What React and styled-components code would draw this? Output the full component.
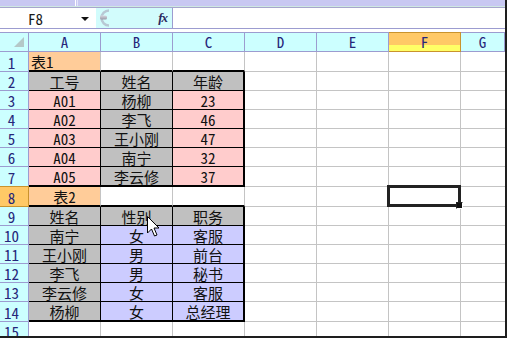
import React from "react";
import styled, { createGlobalStyle } from "styled-components";

const colors = {
	strip: "#c8c8f2",
	stripEdge: "#cfe8e2",
	frameLine: "#a6a6cc",
	headBg: "#ccffff",
	headLine: "#9c9cd0",
	headInk: "#26267a",
	grid: "#c4c4c4",
	peach: "#ffcc99",
	pink: "#ffcccc",
	gray: "#c0c0c0",
	lilac: "#ccccff",
	activeTop: "#ffc966",
	activeBottom: "#ffff66",
	activeLine: "#c9932d"
};

const cellFont = `"Noto Sans Mono CJK SC", "Noto Sans CJK SC", monospace`;

const GlobalStyle = createGlobalStyle`
	html, body {
		margin: 0;
		padding: 0;
		background: #fff;
		overflow: hidden;
	}
	body {
		font-family: ${cellFont};
	}
`;

const Window = styled.div`
	position: relative;
	width: 507px;
	height: 338px;
	box-sizing: border-box;
	border-right: 2px solid #1e1e1e;
	border-bottom: 2px solid #1e1e1e;
	display: flex;
	flex-direction: column;
	overflow: hidden;
	background: #fff;
`;

const TopStrip = styled.div`
	height: 6px;
	flex: none;
	background: ${colors.strip};
	border-bottom: 1px solid ${colors.stripEdge};
	display: flex;
	padding-left: 75px;
	gap: 1px;
`;

const Splitter = styled.span`
	width: 1px;
	height: 100%;
	background: ${props => (props.$dim ? "#e4e4fa" : "#fff")};
`;

const FormulaBar = styled.div`
	height: 20px;
	flex: none;
	display: flex;
	border-top: 1px solid ${colors.frameLine};
	border-bottom: 1px solid ${colors.headLine};
`;

const NameBox = styled.div`
	width: 96px;
	flex: none;
	display: flex;
	align-items: center;
	justify-content: space-between;
	padding: 0 7px 0 28px;
	box-sizing: border-box;
	font-size: 15px;
	color: #1a1a1a;
`;

const DropArrow = styled.span`
	width: 0;
	height: 0;
	border-left: 4px solid transparent;
	border-right: 4px solid transparent;
	border-top: 4px solid #111;
	margin-top: 1px;
`;

const FxZone = styled.div`
	width: 77px;
	flex: none;
	display: flex;
	align-items: center;
	justify-content: space-between;
	background: #d2fcfc;
	border-right: 1px solid ${colors.headLine};
	padding-right: 5px;
	box-sizing: border-box;
`;

const FxLabel = styled.span`
	font-family: "Liberation Serif", serif;
	font-style: italic;
	font-weight: bold;
	font-size: 13px;
	color: #2a2a60;
	letter-spacing: -1px;
`;

const FormulaInput = styled.div`
	flex: 1;
	background: #fff;
`;

const Spacer = styled.div`
	height: 3px;
	flex: none;
`;

const Sheet = styled.div`
	position: relative;
	flex: 1;
	display: grid;
	grid-template-columns: 29px repeat(6, 72px) 1fr;
	grid-template-rows: ${props => props.$rows};
	font-family: ${cellFont};
	font-size: 15px;
`;

const Corner = styled.div`
	background: ${colors.headBg};
	border-top: 1px solid ${colors.headLine};
	border-right: 1px solid ${colors.headLine};
	border-bottom: 1px solid ${colors.headLine};
	box-sizing: border-box;
	position: relative;
	&::after {
		content: "";
		position: absolute;
		right: 4px;
		bottom: 4px;
		border-left: 10px solid transparent;
		border-bottom: 10px solid #b4c8c8;
	}
`;

const ColHead = styled.div`
	box-sizing: border-box;
	display: flex;
	align-items: flex-end;
	justify-content: center;
	padding-bottom: 1px;
	color: ${colors.headInk};
	border-top: 1px solid ${props => (props.$active ? colors.activeLine : colors.headLine)};
	border-bottom: 1px solid ${props => (props.$active ? colors.activeLine : colors.headLine)};
	border-right: 1px solid ${props => (props.$active ? colors.activeLine : colors.headLine)};
	background: ${props =>
		props.$active
			? `linear-gradient(${colors.activeTop} 0 65%, ${colors.activeBottom} 65% 100%)`
			: colors.headBg};
	line-height: 16px;
`;

const RowHead = styled.div`
	box-sizing: border-box;
	display: flex;
	align-items: flex-end;
	justify-content: center;
	padding-right: 5px;
	color: ${colors.headInk};
	background: ${props => (props.$active ? colors.activeTop : colors.headBg)};
	border-right: 1px solid ${props => (props.$active ? colors.activeLine : colors.headLine)};
	border-bottom: 1px solid ${props => (props.$active ? colors.activeLine : colors.headLine)};
	border-top: ${props => (props.$active ? `1px solid ${colors.activeLine}` : "none")};
	margin-top: ${props => (props.$active ? "-1px" : "0")};
	line-height: 16px;
	overflow: hidden;
`;

const Cell = styled.div`
	position: relative;
	box-sizing: border-box;
	display: flex;
	align-items: flex-end;
	justify-content: ${props => (props.$align === "left" ? "flex-start" : "center")};
	padding-left: ${props => (props.$align === "left" ? "2px" : "0")};
	background: ${props => props.$bg || "#fff"};
	border-right: ${props => props.$right};
	border-bottom: ${props => props.$bottom};
	color: #111;
	line-height: 17px;
	white-space: nowrap;
`;

const SelectBox = styled.div`
	position: absolute;
	left: -2px;
	top: -2px;
	right: -1px;
	bottom: -1px;
	border: 3px solid #222;
	pointer-events: none;
	z-index: 1;
`;

const FillHandle = styled.span`
	position: absolute;
	right: -5px;
	bottom: -5px;
	width: 5px;
	height: 5px;
	background: #111;
	border: 1px solid #fff;
	border-top-color: #222;
	border-left-color: #222;
`;

const Pointer = styled.svg`
	position: absolute;
	left: 147px;
	top: 184px;
	width: 13px;
	height: 21px;
	pointer-events: none;
	z-index: 2;
`;

const tables = [
	{ top: 2, bottom: 7, left: 0, right: 2 },
	{ top: 9, bottom: 14, left: 0, right: 2 }
];

const P = colors.peach;
const K = colors.pink;
const G = colors.gray;
const L = colors.lilac;

const data = {
	1: [{ t: "表1", bg: P, align: "left" }],
	2: [{ t: "工号", bg: G }, { t: "姓名", bg: G }, { t: "年龄", bg: G }],
	3: [{ t: "A01", bg: K }, { t: "杨柳", bg: G }, { t: "23", bg: K }],
	4: [{ t: "A02", bg: K }, { t: "李飞", bg: G }, { t: "46", bg: K }],
	5: [{ t: "A03", bg: K }, { t: "王小刚", bg: G }, { t: "47", bg: K }],
	6: [{ t: "A04", bg: K }, { t: "南宁", bg: G }, { t: "32", bg: K }],
	7: [{ t: "A05", bg: K }, { t: "李云修", bg: G }, { t: "37", bg: K }],
	8: [{ t: "表2", bg: P }],
	9: [{ t: "姓名", bg: G }, { t: "性别", bg: G }, { t: "职务", bg: G }],
	10: [{ t: "南宁", bg: G }, { t: "女", bg: L }, { t: "客服", bg: L }],
	11: [{ t: "王小刚", bg: G }, { t: "男", bg: L }, { t: "前台", bg: L }],
	12: [{ t: "李飞", bg: G }, { t: "男", bg: L }, { t: "秘书", bg: L }],
	13: [{ t: "李云修", bg: G }, { t: "女", bg: L }, { t: "客服", bg: L }],
	14: [{ t: "杨柳", bg: G }, { t: "女", bg: L }, { t: "总经理", bg: L }]
};

const columns = ["A", "B", "C", "D", "E", "F", "G"];
const rowCount = 15;
const activeCol = 5;
const activeRow = 8;

const inTable = (r, c) =>
	tables.find(t => r >= t.top && r <= t.bottom && c >= t.left && c <= t.right);

function borders(r, c) {
	const thin = `1px solid ${colors.grid}`;
	const t = inTable(r, c);
	if (t) {
		return {
			right: c === t.right ? "2px solid #000" : "1px solid #000",
			bottom: r === t.bottom ? "2px solid #000" : "1px solid #000"
		};
	}
	const below = inTable(r + 1, c);
	return {
		right: c === columns.length - 1 ? "none" : thin,
		bottom: below && below.top === r + 1 ? "2px solid #000" : thin
	};
}

const thickRows = [1, 7, 8, 14];
const rowHeights = ["20px"]
	.concat(
		Array.from({ length: rowCount }, (_, i) =>
			thickRows.includes(i + 1) ? "20px" : "19px"
		)
	)
	.join(" ");

export default function App() {
	return (
		<>
			<GlobalStyle />
			<Window>
				<TopStrip>
					<Splitter />
					<Splitter $dim />
				</TopStrip>
				<FormulaBar>
					<NameBox>
						F8
						<DropArrow />
					</NameBox>
					<FxZone>
						<svg width="14" height="20" viewBox="0 0 14 20">
							<defs>
								<linearGradient id="pill" x1="0" y1="0" x2="0" y2="1">
									<stop offset="0" stopColor="#d8d8e0" />
									<stop offset="1" stopColor="#9a9aa8" />
								</linearGradient>
							</defs>
							<path
								d="M13 2.5 A7.5 7.5 0 0 0 13 17.5"
								fill="none"
								stroke="#b8c8d4"
								strokeWidth="2.5"
							/>
							<rect x="4" y="7.5" width="7" height="4" rx="1.5" fill="url(#pill)" />
						</svg>
						<FxLabel>fx</FxLabel>
					</FxZone>
					<FormulaInput />
				</FormulaBar>
				<Spacer />
				<Sheet $rows={rowHeights}>
					<Corner />
					{columns.map((col, i) => (
						<ColHead key={col} $active={i === activeCol}>
							{col}
						</ColHead>
					))}
					{Array.from({ length: rowCount }, (_, ri) => {
						const r = ri + 1;
						const row = data[r] || [];
						return (
							<React.Fragment key={r}>
								<RowHead $active={r === activeRow}>{r}</RowHead>
								{columns.map((col, c) => {
									const cell = row[c] || {};
									const b = borders(r, c);
									const selected = r === activeRow && c === activeCol;
									return (
										<Cell
											key={col}
											$bg={cell.bg}
											$align={cell.align}
											$right={b.right}
											$bottom={b.bottom}
										>
											{cell.t}
											{selected && (
												<SelectBox>
													<FillHandle />
												</SelectBox>
											)}
										</Cell>
									);
								})}
							</React.Fragment>
						);
					})}
					<Pointer viewBox="0 0 13 21">
						<path
							d="M0.5 0.5 L0.5 17 L4.5 13 L7.5 20 L10 19 L7 12 L12 12 Z"
							fill="#fff"
							stroke="#000"
							strokeWidth="1"
							strokeLinejoin="miter"
						/>
					</Pointer>
				</Sheet>
			</Window>
		</>
	);
}
